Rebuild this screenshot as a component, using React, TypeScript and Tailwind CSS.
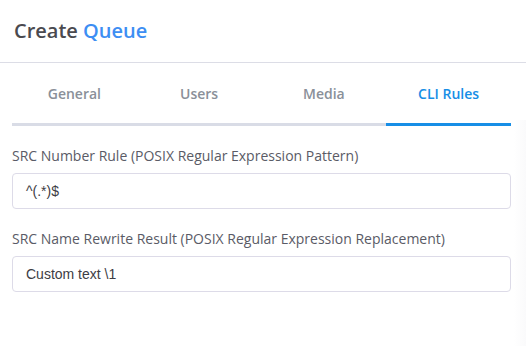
const tabs = ["General", "Users", "Media", "CLI Rules"];

export default function App() {
  const active = 3;
  return (
    <div className="relative w-[526px] h-[346px] bg-white overflow-hidden" style={{ fontFamily: '"Open Sans", sans-serif' }}>
      {/* Header */}
      <div className="h-[63px] flex items-center px-[14px] border-b border-[#dcdde6]">
        <h1 className="text-[20px] font-semibold text-[#4a4a4f]">
          Create <span className="text-[#3d8ef3]">Queue</span>
        </h1>
      </div>

      <div className="pl-[12px] pr-[15px]">
        {/* Tabs */}
        <div className="grid grid-cols-4 h-[63px]">
          {tabs.map((t, i) => (
            <div
              key={t}
              className={`flex items-center justify-center border-b-[3px] pt-[1px] text-[14px] font-semibold ${
                i === active ? "border-[#178ee6] text-[#178ee6]" : "border-[#d9dce6] text-[#8a9099]"
              }`}
            >
              {t}
            </div>
          ))}
        </div>

        {/* Fields */}
        <div className="pt-[20px] flex flex-col gap-[20px]">
          <div>
            <label className="block text-[14px] text-[#5a5b66] leading-[20px] mb-[7px]">
              SRC Number Rule (POSIX Regular Expression Pattern)
            </label>
            <div
              className="h-[36px] flex items-center px-[13px] border border-[#dddbe8] rounded-[4px] text-[14px] text-[#3d3d44]"
              style={{ fontFamily: '"Liberation Sans", Arial, sans-serif' }}
            >
              ^(.*)$
            </div>
          </div>
          <div>
            <label className="block text-[14px] text-[#5a5b66] leading-[20px] mb-[7px]">
              SRC Name Rewrite Result (POSIX Regular Expression Replacement)
            </label>
            <div
              className="h-[36px] flex items-center px-[13px] border border-[#dddbe8] rounded-[4px] text-[14px] text-[#3d3d44]"
              style={{ fontFamily: '"Liberation Sans", Arial, sans-serif' }}
            >
              Custom text \1
            </div>
          </div>
        </div>
      </div>

      {/* faint edge shadow on the right */}
      <div className="absolute right-0 top-[120px] bottom-0 w-[12px] bg-gradient-to-r from-white to-[#fafafb]" />
    </div>
  );
}
